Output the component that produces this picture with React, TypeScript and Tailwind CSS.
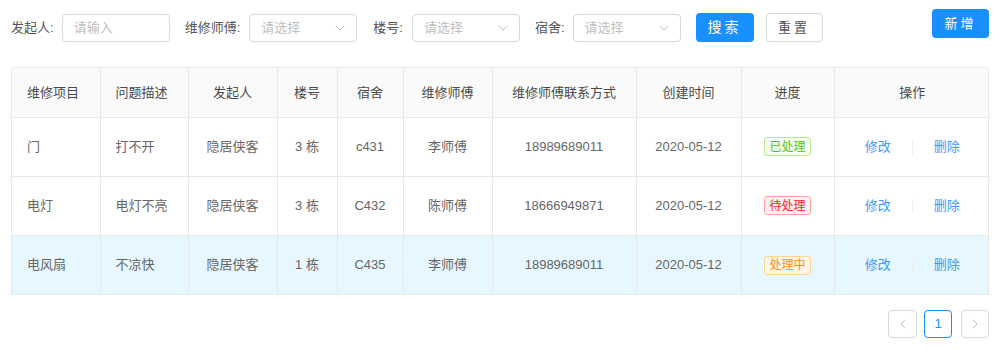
import React from "react";

const font = { fontFamily: '"Liberation Sans", "Noto Sans CJK SC", sans-serif' };

function Chevron() {
  return (
    <svg width="10" height="6" viewBox="0 0 10 6" fill="none" className="shrink-0">
      <path d="M0.8 0.8 L5 5 L9.2 0.8" stroke="#c0c0c0" strokeWidth="1" />
    </svg>
  );
}

function SelectBox() {
  return (
    <div className="flex h-[28px] w-[108px] items-center justify-between rounded-[4px] border border-[#d9d9d9] bg-white pl-[11px] pr-[11px]">
      <span className="text-[13px] text-[#c0c0c0]">请选择</span>
      <Chevron />
    </div>
  );
}

type Row = {
  item: string;
  desc: string;
  who: string;
  bld: string;
  room: string;
  master: string;
  phone: string;
  date: string;
  status: "done" | "wait" | "doing";
  hl?: boolean;
};

const rows: Row[] = [
  { item: "门", desc: "打不开", who: "隐居侠客", bld: "3 栋", room: "c431", master: "李师傅", phone: "18989689011", date: "2020-05-12", status: "done" },
  { item: "电灯", desc: "电灯不亮", who: "隐居侠客", bld: "3 栋", room: "C432", master: "陈师傅", phone: "18666949871", date: "2020-05-12", status: "wait" },
  { item: "电风扇", desc: "不凉快", who: "隐居侠客", bld: "1 栋", room: "C435", master: "李师傅", phone: "18989689011", date: "2020-05-12", status: "doing", hl: true },
];

function Tag({ s }: { s: Row["status"] }) {
  if (s === "done")
    return (
      <span className="inline-flex h-[19px] items-center rounded-[3px] border border-[#b7eb8f] bg-[#f6ffed] px-[4px] text-[12px] text-[#52c41a]">已处理</span>
    );
  if (s === "wait")
    return (
      <span className="inline-flex h-[19px] items-center rounded-[3px] border border-[#ffa39e] bg-[#fff1f0] px-[4px] text-[12px] text-[#f5222d]">待处理</span>
    );
  return (
    <span className="inline-flex h-[19px] items-center rounded-[3px] border border-[#ffd591] bg-[#fff7e6] px-[4px] text-[12px] text-[#fa8c16]">处理中</span>
  );
}

const widths = [88, 88, 89, 60, 66, 89, 144, 105, 93, 156];
const headers = ["维修项目", "问题描述", "发起人", "楼号", "宿舍", "维修师傅", "维修师傅联系方式", "创建时间", "进度", "操作"];

export default function App() {
  return (
    <div className="h-[363px] w-[1000px] bg-white px-[11px]" style={font}>
      <div className="flex items-start justify-between">
        <div className="mt-[13px] flex items-center text-[13px] text-[#555]">
          <span className="mr-[8px]">发起人:</span>
          <div className="flex h-[28px] w-[108px] items-center rounded-[4px] border border-[#d9d9d9] pl-[11px]">
            <span className="text-[13px] text-[#c0c0c0]">请输入</span>
          </div>
          <span className="ml-[15px] mr-[9px]">维修师傅:</span>
          <SelectBox />
          <span className="ml-[16px] mr-[9px]">楼号:</span>
          <SelectBox />
          <span className="ml-[15px] mr-[8px]">宿舍:</span>
          <SelectBox />
          <button className="ml-[15px] h-[29px] w-[58px] rounded-[4px] bg-[#1890ff] text-[14px] tracking-[3px] text-white">搜索</button>
          <button className="ml-[12px] h-[29px] w-[57px] rounded-[4px] border border-[#d9d9d9] bg-white text-[13px] tracking-[3px] text-[#555]">重置</button>
        </div>
        <button className="mt-[9px] h-[29px] w-[57px] rounded-[4px] bg-[#1890ff] text-[13px] tracking-[3px] text-white">新增</button>
      </div>

      <div className="mt-[25px] overflow-hidden rounded-t-[4px] border border-[#e8e8e8]">
        <table className="w-full table-fixed border-collapse text-[13px]">
          <colgroup>
            {widths.map((w, i) => (
              <col key={i} style={{ width: w }} />
            ))}
          </colgroup>
          <thead>
            <tr className="h-[49px] bg-[#fafafa]">
              {headers.map((h, i) => (
                <th
                  key={h}
                  className={`border-b border-[#e8e8e8] font-normal text-[#4a4a4a] ${i < 9 ? "border-r" : ""} ${i < 2 ? "pl-[15px] text-left" : "text-center"}`}
                >
                  {h}
                </th>
              ))}
            </tr>
          </thead>
          <tbody>
            {rows.map((r, ri) => {
              const cells = [r.item, r.desc, r.who, r.bld, r.room, r.master, r.phone, r.date];
              return (
                <tr key={ri} className={`h-[59px] ${r.hl ? "bg-[#e6f7ff]" : "bg-white"}`}>
                  {cells.map((c, i) => (
                    <td
                      key={i}
                      className={`border-r border-[#e8e8e8] text-[#666] ${ri < 2 ? "border-b" : ""} ${i < 2 ? "pl-[15px] text-left" : "text-center"}`}
                    >
                      {c}
                    </td>
                  ))}
                  <td className={`border-r border-[#e8e8e8] text-center ${ri < 2 ? "border-b" : ""}`}>
                    <Tag s={r.status} />
                  </td>
                  <td className={`border-[#e8e8e8] ${ri < 2 ? "border-b" : ""}`}>
                    <div className="flex items-center justify-center text-[#3d9af8]">
                      <span>修改</span>
                      <span className="mx-[21px] h-[14px] w-px bg-[#eeeeee]" />
                      <span>删除</span>
                    </div>
                  </td>
                </tr>
              );
            })}
          </tbody>
        </table>
      </div>

      <div className="mt-[15px] flex justify-end">
        <div className="flex h-[28px] w-[29px] items-center justify-center rounded-[4px] border border-[#d9d9d9]">
          <svg width="6" height="10" viewBox="0 0 6 10" fill="none">
            <path d="M5 0.8 L1 5 L5 9.2" stroke="#bfbfbf" strokeWidth="1" />
          </svg>
        </div>
        <div className="ml-[7px] flex h-[28px] w-[28px] items-center justify-center rounded-[4px] border border-[#1890ff] text-[13px] text-[#1890ff]">1</div>
        <div className="ml-[9px] flex h-[28px] w-[28px] items-center justify-center rounded-[4px] border border-[#d9d9d9]">
          <svg width="6" height="10" viewBox="0 0 6 10" fill="none">
            <path d="M1 0.8 L5 5 L1 9.2" stroke="#bfbfbf" strokeWidth="1" />
          </svg>
        </div>
      </div>
    </div>
  );
}
